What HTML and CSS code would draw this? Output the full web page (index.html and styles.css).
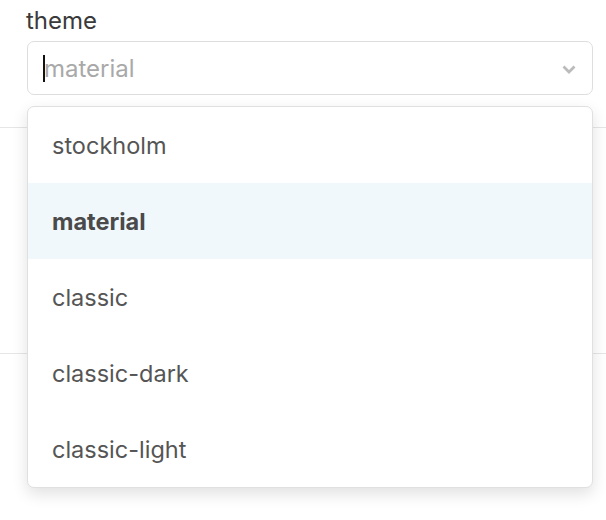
FILE: index.html
```html
<!DOCTYPE html>
<html>
<head>
<meta charset="utf-8">
<link rel="stylesheet" href="styles.css">
</head>
<body>
<div class="page">
  <div class="field">
    <label class="label">theme</label>
    <div class="select">
      <span class="caret"></span>
      <span class="placeholder">material</span>
      <svg class="chevron" width="14" height="9" viewBox="0 0 14 9"><path d="M1.5 1.5 L7 7 L12.5 1.5" fill="none" stroke="#bbbbbb" stroke-width="2.8"/></svg>
    </div>
    <ul class="menu">
      <li class="option">stockholm</li>
      <li class="option active">material</li>
      <li class="option">classic</li>
      <li class="option">classic-dark</li>
      <li class="option">classic-light</li>
    </ul>
  </div>
  <div class="rows">
    <div class="row"></div>
    <div class="row"></div>
  </div>
</div>
</body>
</html>
```
FILE: styles.css
```css
html, body {
  margin: 0;
  padding: 0;
  background: #fff;
  font-family: Inter, "Liberation Sans", sans-serif;
}
.page {
  width: 606px;
  height: 520px;
  overflow: hidden;
}
.field {
  position: relative;
  padding: 5px 13px 0 27px;
}
.label {
  display: block;
  font-size: 24px;
  line-height: 31px;
  color: #3a3a3a;
  margin-left: -1px;
}
.select {
  margin-top: 5px;
  height: 52px;
  border: 1px solid #dedede;
  border-radius: 7px;
  display: flex;
  align-items: center;
  padding: 0 16px 0 15px;
  box-sizing: content-box;
}
.caret {
  width: 2px;
  height: 27px;
  background: #111;
  margin-right: -1px;
}
.placeholder {
  flex: 1;
  font-size: 24px;
  color: #a9a9a9;
}
.chevron {
  display: block;
  margin-top: 3px;
}
.menu {
  position: absolute;
  left: 27px;
  right: 13px;
  top: 106px;
  margin: 0;
  padding: 0;
  list-style: none;
  background: #fff;
  border: 1px solid #e0e0e0;
  border-radius: 7px;
  box-shadow: 0 6px 16px rgba(0, 0, 0, 0.12);
  overflow: hidden;
  z-index: 2;
}
.option {
  height: 76px;
  display: flex;
  align-items: center;
  padding-left: 24px;
  font-size: 23.5px;
  color: #555;
}
.option.active {
  background: #f0f8fc;
  font-weight: 700;
  color: #4a4a4a;
}
.rows {
  margin-top: 32px;
}
.row {
  height: 225px;
  border-top: 1px solid #e6e6e6;
}
```
